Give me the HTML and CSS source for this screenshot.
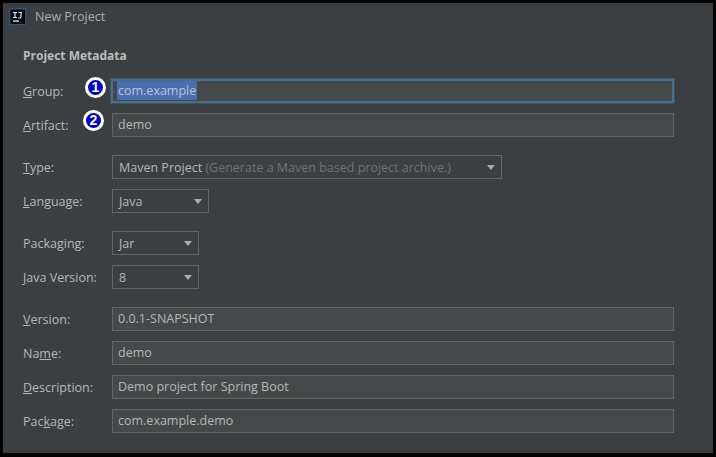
FILE: index.html
```html
<!DOCTYPE html>
<html lang="en">

<head>
  <meta charset="UTF-8" />
  <title>New Project</title>
  <link rel="stylesheet" href="styles.css">
</head>

<body>
  <main class="window">
    <!-- title bar -->
    <header class="titlebar">
      <svg class="logo" width="17" height="17" viewBox="0 0 17 17">
        <rect x="0" y="0" width="17" height="17" fill="#2c5677" />
        <rect x="1.500" y="1.500" width="14.500" height="14.500" fill="#05070a" />
        <path d="M4 4.500h4M6 4.500v5M4 9.500h4M9.500 4.500h3.500M12 4.500v4.500q0 1-1 1h-2" fill="none" stroke="#e8e8e8" stroke-width="1.200" />
        <rect x="4" y="12.500" width="6" height="1.200" fill="#fff" />
      </svg>
      <span class="title">New Project</span>
    </header>

    <section class="content">
      <h2 class="heading">Project Metadata</h2>

      <div class="group">
        <div class="row">
          <label class="label"><u>G</u>roup:</label>
          <div class="field focused"><span class="selected">com.example</span></div>
          <span class="badge badge-one">1</span>
        </div>
        <div class="row">
          <label class="label"><u>A</u>rtifact:</label>
          <div class="field">demo</div>
          <span class="badge badge-two">2</span>
        </div>
      </div>

      <div class="group">
        <div class="row">
          <label class="label"><u>T</u>ype:</label>
          <div class="combo combo-type">
            <span>Maven Project <span class="hint">(Generate a Maven based project archive.)</span></span>
            <i class="arrow"></i>
          </div>
        </div>
        <div class="row">
          <label class="label"><u>L</u>anguage:</label>
          <div class="combo combo-lang"><span>Java</span><i class="arrow"></i></div>
        </div>
      </div>

      <div class="group">
        <div class="row">
          <label class="label">Packa<u>g</u>ing:</label>
          <div class="combo combo-small"><span>Jar</span><i class="arrow"></i></div>
        </div>
        <div class="row">
          <label class="label"><u>J</u>ava Version:</label>
          <div class="combo combo-small"><span>8</span><i class="arrow"></i></div>
        </div>
      </div>

      <div class="group">
        <div class="row">
          <label class="label"><u>V</u>ersion:</label>
          <div class="field">0.0.1-SNAPSHOT</div>
        </div>
        <div class="row">
          <label class="label">Na<u>m</u>e:</label>
          <div class="field">demo</div>
        </div>
        <div class="row">
          <label class="label"><u>D</u>escription:</label>
          <div class="field">Demo project for Spring Boot</div>
        </div>
        <div class="row">
          <label class="label">Pac<u>k</u>age:</label>
          <div class="field">com.example.demo</div>
        </div>
      </div>
    </section>
  </main>
</body>

</html>
```

FILE: styles.css
```css
/* reset */
html,
body,
h2 {
  margin: 0;
  padding: 0;
}

body {
  width: 716px;
  height: 457px;
  overflow: hidden;
  background-color: #000;
  font-family: "Open Sans", "Noto Sans", sans-serif;
  font-size: 12.500px;
  color: #b4b7b8;
}

/* window */
.window {
  box-sizing: border-box;
  width: 710px;
  height: 450px;
  margin: 3px 0 0 3px;
  background-color: #3c3f41;
}

/* title bar */
.titlebar {
  display: flex;
  align-items: center;
  gap: 9px;
  height: 27px;
  padding-left: 6px;
}

.logo {
  flex-shrink: 0;
}

.title {
  font-size: 12.500px;
  color: #a9adae;
}

/* form */
.content {
  display: flex;
  flex-direction: column;
  gap: 18px;
  padding: 17px 39px 0 20px;
}

.heading {
  margin-bottom: -3px;
  font-size: 12px;
  line-height: 17px;
  font-weight: 700;
  color: #b9bcbd;
}

.group {
  display: flex;
  flex-direction: column;
  gap: 10px;
}

.row {
  position: relative;
  display: flex;
  align-items: center;
  height: 24px;
}

.label {
  flex-shrink: 0;
  width: 89px;
}

.field,
.combo {
  box-sizing: border-box;
  height: 24px;
  padding: 0 5px;
  line-height: 21px;
  border: 1px solid #646464;
  background-color: #45494a;
  color: #b4b7b8;
}

.field {
  flex: 1;
}

.focused {
  margin-left: -1px;
  border: 2px solid #466d94;
  line-height: 20px;
  outline: 1px solid #3e5468;
}

.selected {
  display: inline-block;
  height: 19px;
  margin-left: -1px;
  padding: 0 1px;
  background-color: #4b6eaf;
  color: #b9c5d6;
}

/* dropdown */
.combo {
  display: flex;
  align-items: center;
  justify-content: space-between;
  padding: 0 6px 0 6px;
  background-color: #3c3f41;
}

.combo-type {
  width: 390px;
}

.combo-lang {
  width: 97px;
}

.combo-small {
  width: 87px;
}

.hint {
  color: #6f7274;
}

.arrow {
  width: 0;
  height: 0;
  border-top: 5px solid #a9acad;
  border-left: 4.500px solid transparent;
  border-right: 4.500px solid transparent;
}

/* numbered marks over the form */
.badge {
  position: absolute;
  box-sizing: border-box;
  width: 21px;
  height: 21px;
  border: 3px solid #fff;
  border-radius: 50%;
  background-color: #0000c8;
  color: #fff;
  font-family: "Liberation Sans", sans-serif;
  font-size: 14px;
  font-weight: 700;
  line-height: 15px;
  text-align: center;
}

.badge-one {
  top: -2px;
  left: 62px;
}

.badge-two {
  top: -3px;
  left: 60px;
}
```
